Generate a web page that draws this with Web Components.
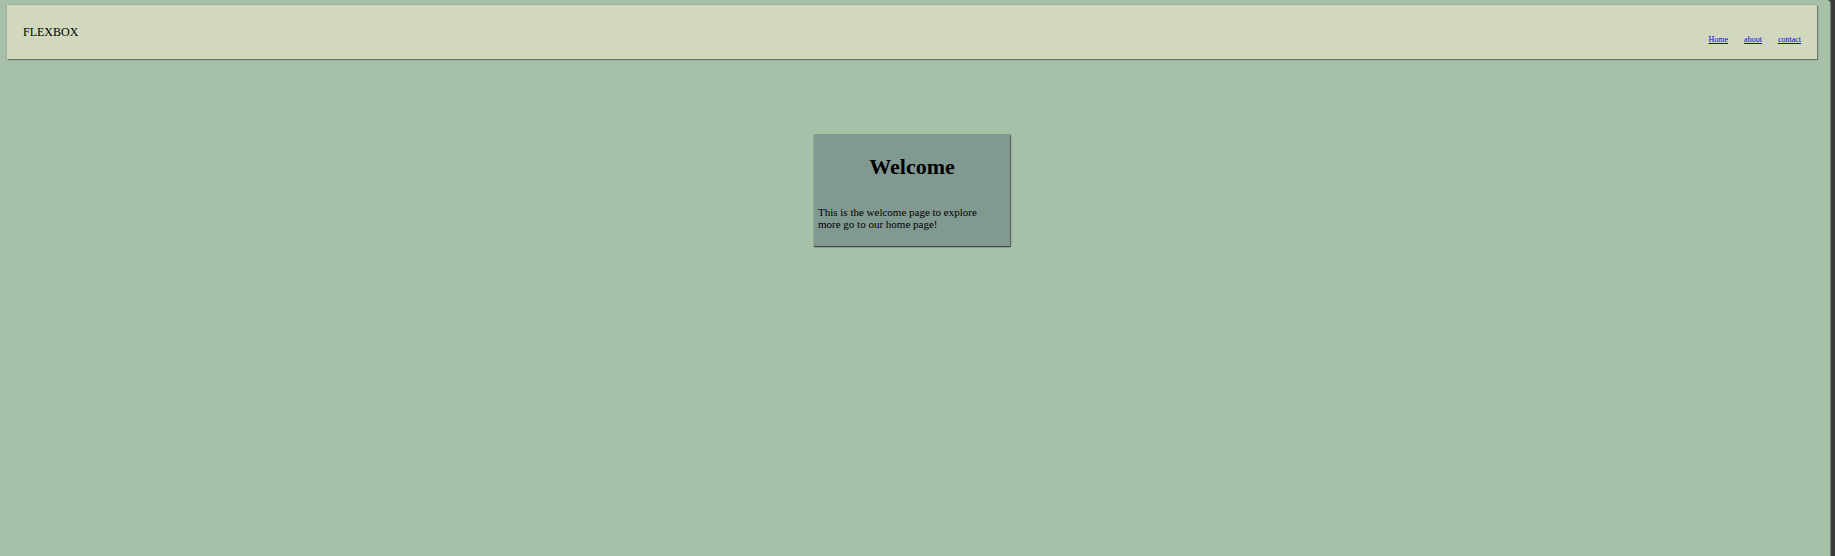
<!DOCTYPE html>
<html lang="en">
<head>
<meta charset="utf-8">
<title>Flexbox</title>
<style>
html { background: #3b3b3b; }
body { margin: 0; font-family: "Liberation Serif", "Times New Roman", serif; color: #000; }
</style>
</head>
<body>
<page-shell>
  <site-header slot="header">
    <span slot="brand">FLEXBOX</span>
    <nav-link href="#home">Home</nav-link>
    <nav-link href="#about">about</nav-link>
    <nav-link href="#contact">contact</nav-link>
  </site-header>
  <welcome-card>
    <span slot="title">Welcome</span>
    This is the welcome page to explore more go to our home page!
  </welcome-card>
</page-shell>
<script>
class BaseElement extends HTMLElement {
  constructor() {
    super();
    this.attachShadow({ mode: "open" }).innerHTML = this.constructor.markup;
  }
}

customElements.define("page-shell", class extends BaseElement {
  static markup = `
    <style>
      :host { display: flex; flex-direction: column; box-sizing: border-box; min-height: 100vh;
        margin-right: 4px; padding: 5px 13px 0 7px; background: #a7c1a8;
        border-right: 1px solid #718372; border-top-right-radius: 4px; }
      main { display: flex; justify-content: center; padding-top: 75px; }
    </style>
    <slot name="header"></slot>
    <main><slot></slot></main>`;
});

customElements.define("site-header", class extends BaseElement {
  static markup = `
    <style>
      :host { display: block; }
      header { display: flex; justify-content: space-between; align-items: center;
        box-sizing: border-box; height: 54px; padding: 0 16px;
        background: #d1d8be; box-shadow: 0 0 2px #819a91, 1px 1px 1px #5f6d62; }
      .brand { font-size: 12px; line-height: 14px; }
      nav { display: flex; gap: 16px; padding-top: 16px; }
    </style>
    <header>
      <div class="brand"><slot name="brand"></slot></div>
      <nav><slot></slot></nav>
    </header>`;
});

customElements.define("nav-link", class extends BaseElement {
  static markup = `
    <style>
      :host { display: block; font-size: 8px; line-height: 10px; }
      a { color: #0000ee; }
    </style>
    <a><slot></slot></a>`;
  connectedCallback() {
    this.shadowRoot.querySelector("a").href = this.getAttribute("href");
  }
});

customElements.define("welcome-card", class extends BaseElement {
  static markup = `
    <style>
      :host { display: block; }
      article { box-sizing: border-box; width: 196px; padding: 20px 4px 16px;
        background: #819a91; box-shadow: 0 1px 1px #444, 1px 1px 1px #5f6d62; }
      h1 { margin: 0; font-size: 22px; line-height: 25px; text-align: center; }
      p { margin: 27px 0 0; padding-right: 12px; font-size: 11px; line-height: 12px; }
    </style>
    <article>
      <h1><slot name="title"></slot></h1>
      <p><slot></slot></p>
    </article>`;
});
</script>
</body>
</html>
